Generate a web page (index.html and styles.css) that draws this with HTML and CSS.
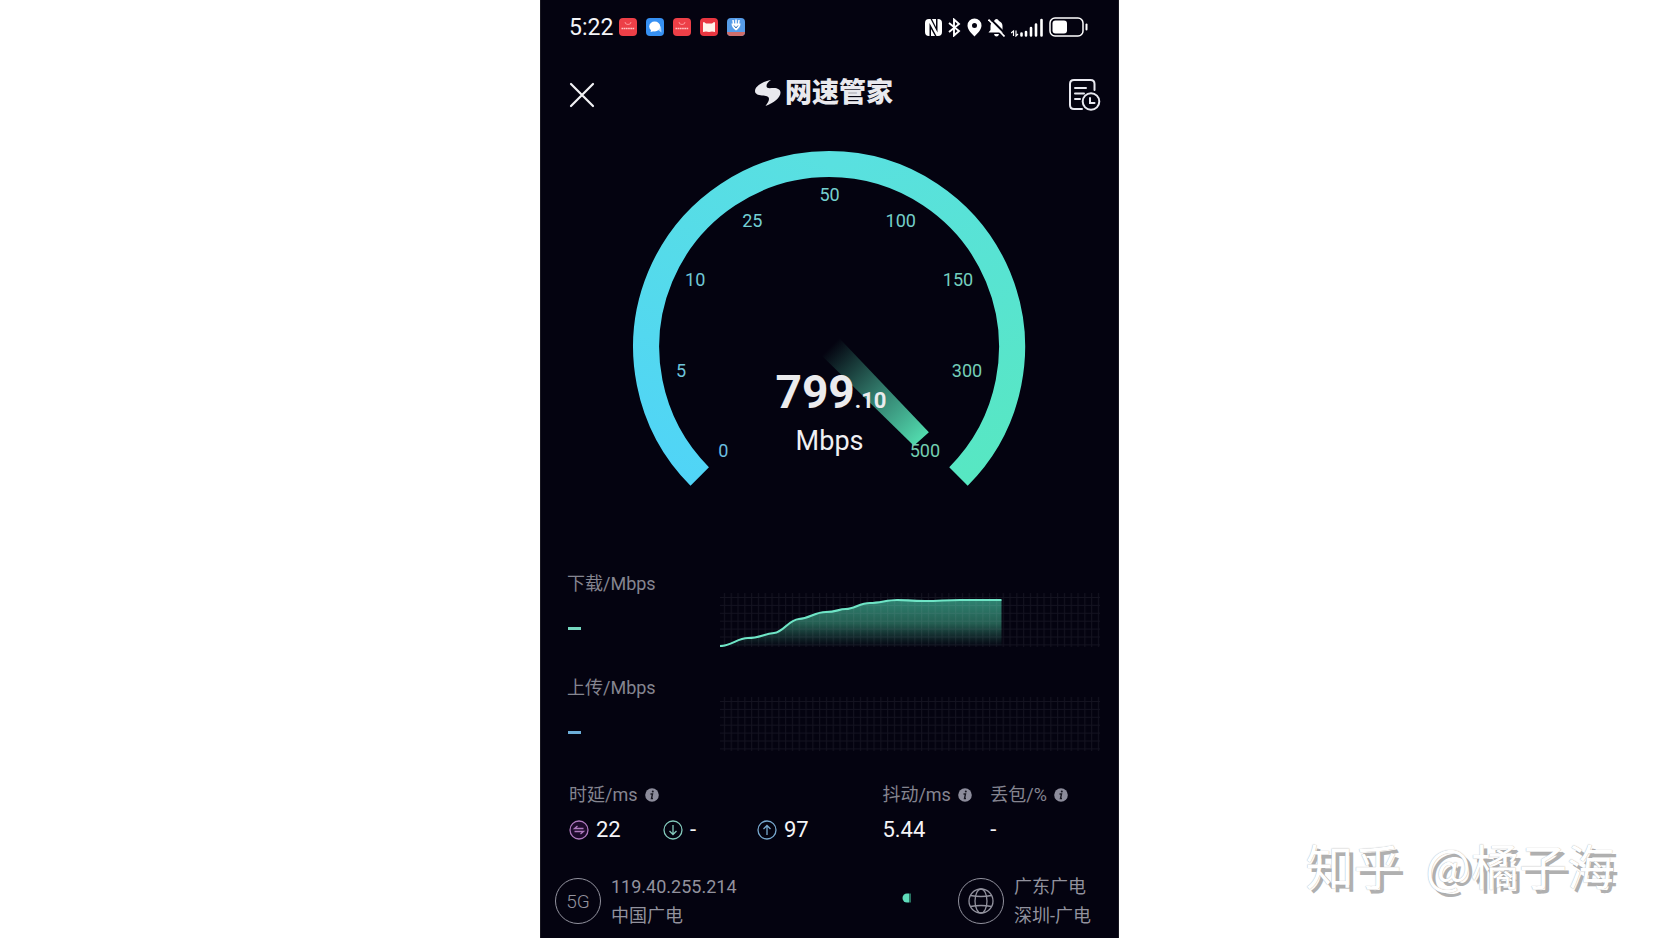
FILE: index.html
```html
<!DOCTYPE html>
<html lang="zh-CN">
<head>
<meta charset="utf-8">
<meta name="viewport" content="width=device-width, initial-scale=1">
<title>网速管家</title>
<link rel="stylesheet" href="styles.css">
</head>
<body>
<main class="phone">
  <div class="status">
    <span class="clock">5:22</span>
    <div class="apps">
      <svg width="18" height="18" viewBox="0 0 18 18"><rect width="18" height="18" rx="4" fill="#ed3f47"/><path d="M6 4a3 2.500 0 0 0 6 0" fill="none" stroke="#ffaaac" stroke-width=".8"/><path d="M2.500 10.500h13" stroke="#ffc4c4" stroke-width="1.500" stroke-dasharray="1.700 .5"/></svg>
      <svg width="18" height="18" viewBox="0 0 18 18"><rect width="18" height="18" rx="4" fill="#3690f3"/><path d="M12 12l3.500 2.500L15 8z" fill="#a8d4ff"/><ellipse cx="8.700" cy="8.500" rx="5.500" ry="5" fill="#fff"/><path d="M4.500 14l1-3.500 3 2.500z" fill="#fff"/></svg>
      <svg width="18" height="18" viewBox="0 0 18 18"><rect width="18" height="18" rx="4" fill="#ed3f47"/><path d="M6 4a3 2.500 0 0 0 6 0" fill="none" stroke="#ffaaac" stroke-width=".8"/><path d="M2.500 10.500h13" stroke="#ffc4c4" stroke-width="1.500" stroke-dasharray="1.700 .5"/></svg>
      <svg width="18" height="18" viewBox="0 0 18 18"><rect width="18" height="18" rx="4" fill="#e93640"/><path d="M3 4.500l1-.5 2 1.500h6L14 4l1 .5V14q-3-1-6 0-3-1-6 0z" fill="#fff3ea"/></svg>
      <svg width="18" height="18" viewBox="0 0 18 18"><rect width="18" height="18" rx="4" fill="#569ce8"/><path d="M0 14h18a4 4 0 0 1-4 4H4a4 4 0 0 1-4-4z" fill="#cf6e6b"/><path d="M6 2l.5 4M9 1.500V6M12 2l-.5 4" stroke="#fff" stroke-width="1.500"/><path d="M4.500 5.500h9q0 4-4.500 7-4.500-3-4.500-7z" fill="#fff"/><path d="M7 7.500l2 2.500 2-2.500" fill="none" stroke="#3475bd"/></svg>
    </div>
    <div class="signals">
      <svg width="17" height="19" viewBox="0 0 17 19"><path d="M4 1h1.500l7 13.500V1H13q4 0 4 4v9q0 4-4 4h-1.500L4.500 5v13H4q-4 0-4-4V5q0-4 4-4z" fill="#fff"/><path d="M7 1h4v8zM6 11l4 7H6z" fill="#fff"/></svg>
      <svg width="13" height="19" viewBox="0 0 13 19"><path d="M1 5l10 8-5 4.500v-16L11 6 1 14" fill="none" stroke="#fff" stroke-width="1.900"/></svg>
      <svg width="15" height="19" viewBox="0 0 15 19"><path fill-rule="evenodd" d="M7.500.5a7 7 0 0 1 7 7c0 4-4 8-7 11-3-3-7-7-7-11a7 7 0 0 1 7-7zm0 4.500a2.500 2.500 0 1 0 0 5 2.500 2.500 0 0 0 0-5z" fill="#fff"/></svg>
      <svg width="17" height="19" viewBox="0 0 17 19"><path d="M6 3q1-2 2.500-2T11 3q3.500 1.500 3.500 5v4l1.500 2.500H.5L2.500 12V8q0-3.500 3.500-5zM6 16h5q-.5 2.500-2.500 2.500T6 16z" fill="#fff"/><path d="M2.500 1L17.500 16" stroke="#050410" stroke-width="2"/><path d="M.5 1.500l16 17" stroke="#fff" stroke-width="1.700"/></svg>
      <svg width="32" height="19" viewBox="0 0 32 19"><path d="M2.500 18v-5L0 15M5 12.500V18l2-2" fill="none" stroke="#fff" stroke-width="1.200"/><path d="M10.500 17.500v-2M15 17.500v-3.500M20 17.500V10M25 17.500V6.500M30.500 17.500V2" stroke="#fff" stroke-width="2.600" stroke-linecap="round"/></svg>
      <svg width="39" height="20" viewBox="0 0 39 20"><rect x="1" y="1" width="33" height="18" rx="5" fill="none" stroke="#fff" stroke-width="1.500"/><rect x="3.500" y="3.500" width="14.500" height="13" rx="3" fill="#fff"/><path d="M37.500 7.500v5" stroke="#fff" stroke-width="2" stroke-linecap="round"/></svg>
    </div>
  </div>

  <header class="bar">
    <button class="icon-btn" aria-label="关闭"><svg width="26" height="26" viewBox="0 0 26 26"><path d="M2 2l22 22M24 2L2 24" stroke="#f2f2f5" stroke-width="2.200" stroke-linecap="round"/></svg></button>
    <h1 class="brand">
      <svg width="26" height="28" viewBox="0 0 26 28"><path d="M16 1C7 2.500 0 7.500 0 12c0 3 3 4 7 4.500 4 .500 7 .500 7 3.500 0 2.500-2 4.500-3.500 7C19 24 25.500 18.500 25.500 13.500c0-3-3-4.500-6.500-4.500-4 0-7.500 1-7.500-2C11.500 4.500 13.500 2.500 16 1z" fill="#e9e9ee"/></svg>
      <span>网速管家</span>
    </h1>
    <button class="icon-btn" aria-label="测速记录"><svg width="32" height="32" viewBox="0 0 32 32" fill="none" stroke="#e9e9f0" stroke-width="2" stroke-linecap="round"><path d="M25.500 11V5q0-4-4-4H5Q1 1 1 5v21q0 4 4 4h8M6 9h11M6 14.500h9M6 20h5"/><circle cx="22" cy="22.500" r="8.300"/><path d="M21 19v5h4.500"/></svg></button>
  </header>

  <section class="gauge">
    <svg viewBox="0 0 420 360" role="img" aria-label="799.10 Mbps">
      <defs>
        <linearGradient id="arc-left" gradientUnits="userSpaceOnUse" x1="60" y1="340" x2="210" y2="24"><stop offset="0" stop-color="#50d4f7"/><stop offset="1" stop-color="#59e0e0"/></linearGradient>
        <linearGradient id="arc-right" gradientUnits="userSpaceOnUse" x1="210" y1="24" x2="350" y2="340"><stop offset="0" stop-color="#59e0e0"/><stop offset="1" stop-color="#57e7c2"/></linearGradient>
        <linearGradient id="needle" gradientUnits="userSpaceOnUse" x1="211" y1="206" x2="302" y2="298"><stop offset="0" stop-color="#4fd2a8" stop-opacity="0"/><stop offset=".5" stop-color="#4fc7a5" stop-opacity=".6"/><stop offset="1" stop-color="#52dbae"/></linearGradient>
      </defs>
      <g fill="none" stroke-width="26">
        <path d="M80.500 335.500A182.500 182.500 0 0 1 210 24" stroke="url(#arc-left)"/>
        <path d="M209 24A182.500 182.500 0 0 1 338.500 335.500" stroke="url(#arc-right)"/>
      </g>
      <path d="M219 197L309 291.500 294 305 201 214z" fill="url(#needle)"/>
      <g class="ticks">
        <text x="104" y="316" fill="#6bbfe0">0</text>
        <text x="62" y="236" fill="#6fc4da">5</text>
        <text x="76" y="146" fill="#6fc8d6">10</text>
        <text x="133" y="87" fill="#74d0d4">25</text>
        <text x="210" y="61" fill="#74d0ce">50</text>
        <text x="281" y="87" fill="#74cfc8">100</text>
        <text x="338" y="146" fill="#74cebf">150</text>
        <text x="347" y="236" fill="#74ceb8">300</text>
        <text x="305" y="316" fill="#74ceb0">500</text>
      </g>
      <text class="speed" x="156" y="267">799<tspan class="decimal">.10</tspan></text>
      <text class="unit" x="210" y="309">Mbps</text>
    </svg>
  </section>

  <section class="flow">
    <div class="flow-info"><h2 class="label">下载/Mbps</h2><span class="dash down"></span></div>
    <svg class="chart" viewBox="0 0 380 54" preserveAspectRatio="none">
      <defs>
        <pattern id="grid" width="6.800" height="7.900" patternUnits="userSpaceOnUse" y="4"><path d="M4.500 0v7.900M0 .5h6.800" stroke="#b4b4cc" stroke-opacity=".09" stroke-width="1"/></pattern>
        <linearGradient id="area" x1="0" y1="0" x2="0" y2="1"><stop offset="0" stop-color="#2f8271"/><stop offset=".5" stop-color="#286859" stop-opacity=".9"/><stop offset="1" stop-color="#235b50" stop-opacity="0"/></linearGradient>
      </defs>
      <path d="M0 54C12 54 17 45 28 45S44 41 54 40 68 27 79 26 95 19 106 19 118 16 126 16 140 10 150 10 167 7 177 7 190 8 205 8 225 7 240 7H281.500V54z" fill="url(#area)"/>
      <rect width="380" height="54" fill="url(#grid)"/>
      <path d="M0 53C12 53 17 45 28 45S44 41 54 40 68 27 79 26 95 19 106 19 118 16 126 16 140 10 150 10 167 7 177 7 190 8 205 8 225 7 240 7H281.500" fill="none" stroke="#6fe5c6" stroke-width="2.200"/>
    </svg>
  </section>
  <section class="flow">
    <div class="flow-info"><h2 class="label">上传/Mbps</h2><span class="dash up"></span></div>
    <svg class="chart" viewBox="0 0 380 54" preserveAspectRatio="none"><rect width="380" height="54" fill="url(#grid)"/></svg>
  </section>

  <section class="stats">
    <div class="stat latency">
      <h2 class="label">时延/ms <svg width="14" height="14" viewBox="0 0 14 14"><circle cx="7" cy="7" r="6.800" fill="#8c8c9b"/><circle cx="7.800" cy="3.500" r="1" fill="#181822"/><path d="M5.500 6h2l-1 4.500h1.500" fill="none" stroke="#181822" stroke-width="1.400"/></svg></h2>
      <div class="values">
        <span class="value"><svg width="20" height="20" viewBox="0 0 20 20" fill="none" stroke="#ae79bd" stroke-width="1.300"><circle cx="10" cy="10" r="9" fill="#1d0a2b"/><path d="M14.500 8.500H5.500L8.500 6M5.500 11.500h9L11.500 14"/></svg>22</span>
        <span class="value"><svg width="20" height="20" viewBox="0 0 20 20" fill="none" stroke="#83c9bb" stroke-width="1.300"><circle cx="10" cy="10" r="9"/><path d="M10 5v9.500M6.500 11L10 14.500 13.500 11"/></svg>-</span>
        <span class="value"><svg width="20" height="20" viewBox="0 0 20 20" fill="none" stroke="#78a9cf" stroke-width="1.300"><circle cx="10" cy="10" r="9"/><path d="M10 15V5.500M6.500 9L10 5.500 13.500 9"/></svg>97</span>
      </div>
    </div>
    <div class="stat jitter">
      <h2 class="label">抖动/ms <svg width="14" height="14" viewBox="0 0 14 14"><circle cx="7" cy="7" r="6.800" fill="#8c8c9b"/><circle cx="7.800" cy="3.500" r="1" fill="#181822"/><path d="M5.500 6h2l-1 4.500h1.500" fill="none" stroke="#181822" stroke-width="1.400"/></svg></h2>
      <span class="value">5.44</span>
    </div>
    <div class="stat loss">
      <h2 class="label">丢包/% <svg width="14" height="14" viewBox="0 0 14 14"><circle cx="7" cy="7" r="6.800" fill="#8c8c9b"/><circle cx="7.800" cy="3.500" r="1" fill="#181822"/><path d="M5.500 6h2l-1 4.500h1.500" fill="none" stroke="#181822" stroke-width="1.400"/></svg></h2>
      <span class="value">-</span>
    </div>
  </section>

  <footer class="network">
    <div class="node client">
      <span class="ring">5G</span>
      <p class="lines">119.40.255.214<br>中国广电</p>
    </div>
    <svg class="pulse" width="10" height="10" viewBox="0 0 10 10"><path d="M7 .5H5a4.500 4.500 0 0 0 0 9h2z" fill="#5fdcbb"/><path d="M7 .5h2v9H7z" fill="#27705f"/></svg>
    <div class="node server">
      <span class="ring"><svg width="26" height="26" viewBox="0 0 26 26" fill="none" stroke="#92929e" stroke-width="1.300"><circle cx="13" cy="13" r="12"/><ellipse cx="13" cy="13" rx="6" ry="12"/><path d="M2.500 7.500q10.500 2 21 0M2.500 18.500q10.500-2 21 0"/></svg></span>
      <p class="lines">广东广电<br>深圳-广电</p>
    </div>
  </footer>
</main>
<div class="watermark"><span>知乎</span><span>@橘子海</span></div>
</body>
</html>
```
FILE: styles.css
```css
* { box-sizing: border-box; }

body {
  margin: 0;
  background: #fff;
  font-family: Roboto, "Noto Sans CJK SC", sans-serif;
}

h1, h2, p { margin: 0; font-weight: 400; }
svg { display: block; flex: none; }

.phone {
  max-width: 579px;
  min-height: 100vh;
  margin: 0 auto;
  padding-bottom: 12px;
  background: #040310;
  border: solid #191821;
  border-width: 0 1px;
  color: #f4f4f7;
}

.status {
  display: flex;
  align-items: center;
  height: 54px;
  padding: 0 30px 0 28px;
}
.clock { width: 50px; padding-top: 2px; font-size: 23px; line-height: 28px; }
.apps { display: flex; gap: 9px; }
.signals { display: flex; align-items: center; gap: 6px; margin-left: auto; }

.bar {
  display: flex;
  align-items: center;
  justify-content: space-between;
  height: 82px;
  padding: 0 17px 0 28px;
}
.icon-btn { padding: 0; border: 0; background: none; cursor: pointer; }
.brand {
  display: flex;
  align-items: center;
  gap: 4px;
  padding: 0 16px 4px 0;
  color: #e9e9ee;
  font-size: 27px;
  font-weight: 900;
  line-height: 32px;
}

.gauge svg { width: 73%; margin: 4px auto 0; }
.ticks { font-size: 18px; text-anchor: middle; }
.speed { font-size: 46px; font-weight: 700; fill: #ebebed; }
.decimal { font-size: 22px; }
.unit { font-size: 27px; text-anchor: middle; fill: #f0f0f3; }

.flow {
  display: flex;
  align-items: flex-end;
  justify-content: space-between;
  height: 104px;
  padding: 0 18px 0 26px;
}
.gauge + .flow { margin-top: 42px; }
.flow-info { height: 77px; }
.label {
  display: flex;
  align-items: center;
  gap: 7px;
  color: #858590;
  font-size: 18px;
  line-height: 28px;
  white-space: nowrap;
}
.dash { display: block; width: 13px; height: 3px; margin: 29px 0 0 1px; }
.down { background: #76d8c0; }
.up { background: #6daed8; }
.chart { width: 72%; max-width: 380px; height: 54px; }

.stats {
  display: flex;
  padding: 30px 28px 0;
}
.latency { flex: 314; }
.jitter { flex: 108; }
.loss { flex: 100; }
.values { display: grid; grid-template-columns: 94px 94px 94px; }
.value {
  display: flex;
  align-items: center;
  gap: 7px;
  margin-top: 7px;
  font-size: 22px;
  line-height: 28px;
}

.network {
  display: flex;
  align-items: center;
  justify-content: space-between;
  padding: 28px 27px 0 14px;
}
.node { display: flex; align-items: center; gap: 10px; }
.ring {
  display: flex;
  align-items: center;
  justify-content: center;
  width: 46px;
  height: 46px;
  border: 1px solid #92929e;
  border-radius: 50%;
  color: #92929e;
  font-size: 19px;
  font-weight: 300;
}
.lines { color: #92929e; font-size: 18px; line-height: 29px; }
.pulse { margin: 0 0 6px 120px; }

.watermark {
  position: absolute;
  right: 44px;
  bottom: 38px;
  display: flex;
  gap: 24px;
  color: #fff;
  font-family: "Noto Sans CJK SC", sans-serif;
  font-size: 48px;
  line-height: 72px;
  text-shadow: 0 0 1px #999, 4px 4px 0 #b0b0b0;
}
```
